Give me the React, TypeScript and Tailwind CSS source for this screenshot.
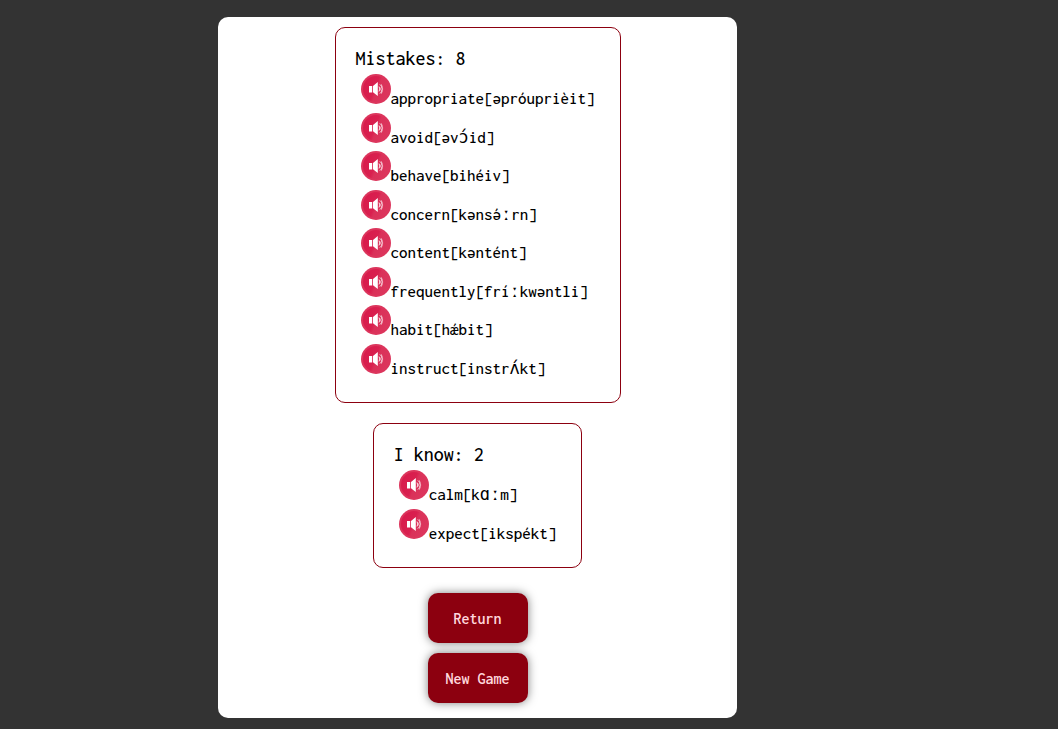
type Word = { text: string; sound: string };

const mistakes: Word[] = [
  { text: 'appropriate', sound: 'əpróuprièit' },
  { text: 'avoid', sound: 'əvɔ́id' },
  { text: 'behave', sound: 'bihéiv' },
  { text: 'concern', sound: 'kənsə́ːrn' },
  { text: 'content', sound: 'kəntént' },
  { text: 'frequently', sound: 'fríːkwəntli' },
  { text: 'habit', sound: 'hǽbit' },
  { text: 'instruct', sound: 'instrʌ́kt' },
];

const known: Word[] = [
  { text: 'calm', sound: 'kɑːm' },
  { text: 'expect', sound: 'ikspékt' },
];

function SpeakerIcon() {
  return (
    <svg viewBox="0 0 30 30" className="size-full" aria-hidden="true">
      <defs>
        <linearGradient id="disc" x1="0" y1="0.3" x2="1" y2="0.7">
          <stop offset="0" stopColor="#d81b4c" />
          <stop offset="0.45" stopColor="#d9204f" />
          <stop offset="0.55" stopColor="#da3159" />
          <stop offset="1" stopColor="#dc365d" />
        </linearGradient>
      </defs>
      <circle cx="15" cy="15" r="15" fill="#dc355c" />
      <circle cx="15" cy="15" r="13" fill="url(#disc)" />
      <path d="M8 12h3.2v6.4H8zM12 12l4.8-4v14L12 18.2z" fill="#fff" />
      <g fill="none" stroke="#fff" strokeWidth="0.9">
        <path d="M18 12.6q1.7 2.4 0 4.8" />
        <path d="M18.8 10.4q3.2 1.6 1 4.6q2.2 3-1 4.6" strokeOpacity="0.8" />
        <path d="M20.4 10.4q2.6 4.6 0 9.2" strokeOpacity="0.7" />
      </g>
    </svg>
  );
}

function WordCard({ title, words, size }: { title: string; words: Word[]; size: string }) {
  return (
    <section className={`rounded-[10px] border border-[#8c000f] p-5 ${size}`}>
      <h2 className="pb-1 text-xl leading-[22px] font-medium">{title}: {words.length}</h2>
      <ul className="grid flex-1 auto-rows-fr px-[5px]">
        {words.map((word) => (
          <li key={word.text} className="flex items-start">
            <button type="button" aria-label={`Play ${word.text}`} className="size-[30px] shrink-0 rounded-full">
              <SpeakerIcon />
            </button>
            <span className="pt-[15px] text-[17px] leading-[18px] font-medium whitespace-nowrap">{word.text}[{word.sound}]</span>
          </li>
        ))}
      </ul>
    </section>
  );
}

function ActionButton({ label }: { label: string }) {
  return (
    <button
      type="button"
      className="h-[50px] w-[100px] rounded-[10px] bg-[#8c000f] pt-[2px] text-base font-semibold text-[#ffd6dc] shadow-[0_0_10px_rgba(0,0,0,0.5)]"
    >
      {label}
    </button>
  );
}

export default function App() {
  return (
    <div className="min-h-screen bg-[#333333] pt-[17px] pr-[321px] pb-[11px] pl-[218px] font-['Inconsolata','DejaVu_Sans_Mono',monospace] text-black">
      <main className="flex flex-col items-center gap-5 rounded-[10px] bg-white pt-[10px] pb-[15px]">
        <WordCard title="Mistakes" words={mistakes} size="flex min-h-[376px] min-w-[286px] flex-col" />
        <WordCard title="I know" words={known} size="flex min-h-[145px] min-w-[209px] flex-col" />
        <div className="flex flex-col gap-[10px] pt-[5px]">
          <ActionButton label="Return" />
          <ActionButton label="New Game" />
        </div>
      </main>
    </div>
  );
}
